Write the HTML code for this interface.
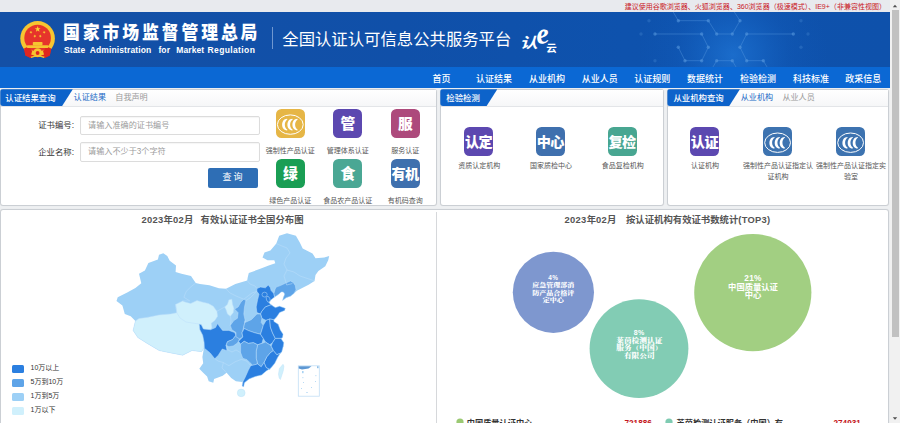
<!DOCTYPE html>
<html lang="zh-CN">
<head>
<meta charset="utf-8">
<title>全国认证认可信息公共服务平台</title>
<style>
html,body{margin:0;padding:0;}
body{width:900px;height:423px;overflow:hidden;position:relative;background:#eef0f2;font-family:"Liberation Sans","Noto Sans CJK SC",sans-serif;color:#333;}
.abs{position:absolute;}
#topstrip{left:0;top:0;width:890px;height:12px;background:#e8eaee;}
#toptext{right:14px;top:1.8px;font-size:7.02px;line-height:10px;color:#c8161d;white-space:nowrap;}
#header{left:0;top:12px;width:890px;height:55.5px;background:linear-gradient(90deg,#1450a6 0%,#1050a9 45%,#0e52ad 70%,#0e51ab 100%);overflow:hidden;}
#nav{left:0;top:67.4px;width:890px;height:20.6px;background:#0b68d4;}
.navi{position:absolute;top:1.7px;height:21px;line-height:21px;font-size:9px;font-weight:500;color:#fff;white-space:nowrap;transform:translateX(-50%);}
#title1{left:63.4px;top:21.4px;font-size:18.3px;line-height:24px;font-weight:900;color:#fff;letter-spacing:3.17px;white-space:nowrap;transform:scaleX(0.92);transform-origin:0 0;}
#title2{left:0;top:45px;font-size:8.5px;line-height:10px;font-weight:700;color:#fff;white-space:nowrap;letter-spacing:0.12px;}
#title2 span{position:absolute;top:0;}
#vdiv{left:272px;top:26.5px;width:1px;height:22.5px;background:#6f97d0;}
#title3{left:282.3px;top:26.6px;font-size:16.36px;line-height:24px;color:#fff;white-space:nowrap;}
#sbtrack{left:890px;top:0;width:10px;height:423px;background:#f1f1f1;}
#thumb{left:891.5px;top:10px;width:7px;height:327px;background:#c1c1c1;}
.panel{position:absolute;background:#fff;border:1px solid #cbcfd4;box-sizing:border-box;border-radius:3px;box-shadow:0 0 1px rgba(0,0,0,0.10);}
.phead{border-top-left-radius:3px;}
.tabhead{border-top-left-radius:3px;border-bottom-left-radius:3px;}
.phead{position:absolute;left:0;top:0;right:0;height:15.7px;border-bottom:1px solid #e3e5e8;background:linear-gradient(#fff,#f6f7f8);}
.tabhead{position:absolute;left:-1px;top:-1px;height:17.2px;background:#0d63ca;color:#fff;font-size:8.4px;line-height:18px;font-weight:500;white-space:nowrap;padding-left:5px;box-sizing:border-box;clip-path:polygon(0 0,100% 0,calc(100% - 11px) 100%,0 100%);}
.tab{position:absolute;top:0.2px;height:16px;line-height:16px;font-size:8.1px;white-space:nowrap;color:#999;}
.tab.on{color:#2069c6;}
.lbl{position:absolute;font-size:8.4px;line-height:12px;color:#333;white-space:nowrap;text-align:right;}
.inp{position:absolute;box-sizing:border-box;border:1px solid #dcdcdc;border-radius:2px;background:#fff;font-size:8.15px;color:#9c9c9c;line-height:17px;padding-left:7px;white-space:nowrap;box-shadow:inset 0 1px 1px rgba(0,0,0,0.04);}
.ico{position:absolute;width:28.9px;height:28.9px;border-radius:5.5px;color:#fff;font-weight:900;text-align:center;line-height:31.4px;font-size:14.7px;white-space:nowrap;}
.ico.s{width:28.8px;height:28.8px;line-height:31.4px;}
.icl{position:absolute;font-size:7px;line-height:9.8px;color:#555;text-align:center;transform:translateX(-50%);white-space:nowrap;}
.ctitle{position:absolute;font-size:9.37px;line-height:12px;color:#555;font-weight:700;white-space:pre;}
.dg{letter-spacing:0.3px;}
.leg{position:absolute;left:12px;width:11.7px;height:7.5px;border-radius:1.5px;}
.legt{position:absolute;left:30.5px;font-size:7px;line-height:10px;color:#333;white-space:nowrap;}
.pct{font-family:'Liberation Sans',sans-serif;letter-spacing:0.4px;}
.btxt{position:absolute;color:#fff;font-weight:700;text-align:center;white-space:nowrap;transform:translateX(-50%);}
</style>
</head>
<body>
<div id="topstrip" class="abs"></div>
<div id="toptext" class="abs">建议使用谷歌浏览器、火狐浏览器、360浏览器（极速模式）、IE9+（非兼容性视图）</div>
<div id="header" class="abs">
<svg class="abs" style="left:0;top:0" width="890" height="55" viewBox="0 12 890 55">
<defs><radialGradient id="glow" cx="733" cy="55" r="95" gradientUnits="userSpaceOnUse"><stop offset="0" stop-color="#2480e2" stop-opacity="0.58"/><stop offset="0.3" stop-color="#1e78dc" stop-opacity="0.36"/><stop offset="0.6" stop-color="#186dd2" stop-opacity="0.14"/><stop offset="1" stop-color="#1265c8" stop-opacity="0"/></radialGradient></defs>
<rect x="620" y="12" width="240" height="56" fill="url(#glow)"/>
<g fill="none" stroke="#5a9be0" stroke-opacity="0.5" stroke-width="0.8">
<polyline points="678.3,20.7 708.3,20.7 716.7,34 732.3,34 740,20.7"/>
<polyline points="655,34 701.7,34 708.3,47.3 701.7,60.7 685,60.7 678.3,47.3"/>
<polyline points="746.7,34 793.3,34"/>
<polyline points="746.7,34 740,47.3 746.7,60.7 763.3,60.7"/>
<polyline points="716.7,60.7 732.3,60.7"/>
<polyline points="716.7,60.7 710,72"/>
<polyline points="732.3,60.7 739,72"/>
<polyline points="763.3,60.7 770,72"/>
<polyline points="740,20.7 733,10"/>
<polyline points="678.3,20.7 672,10"/>
</g><g fill="#5a9be0" fill-opacity="0.55">
<circle cx="678.3" cy="20.7" r="1.7"/>
<circle cx="708.3" cy="20.7" r="1.7"/>
<circle cx="740" cy="20.7" r="1.7"/>
<circle cx="655" cy="34" r="1.7"/>
<circle cx="701.7" cy="34" r="1.7"/>
<circle cx="716.7" cy="34" r="1.7"/>
<circle cx="732.3" cy="34" r="1.7"/>
<circle cx="746.7" cy="34" r="1.7"/>
<circle cx="793.3" cy="34" r="1.7"/>
<circle cx="678.3" cy="47.3" r="1.7"/>
<circle cx="708.3" cy="47.3" r="1.7"/>
<circle cx="740" cy="47.3" r="1.7"/>
<circle cx="685" cy="60.7" r="1.7"/>
<circle cx="701.7" cy="60.7" r="1.7"/>
<circle cx="716.7" cy="60.7" r="1.7"/>
<circle cx="732.3" cy="60.7" r="1.7"/>
<circle cx="746.7" cy="60.7" r="1.7"/>
<circle cx="763.3" cy="60.7" r="1.7"/>
<circle cx="649" cy="20.7" r="1.7" fill-opacity="0.25"/>
<circle cx="641" cy="34" r="1.7" fill-opacity="0.25"/>
<circle cx="655" cy="60.7" r="1.7" fill-opacity="0.25"/>
<circle cx="801" cy="20.7" r="1.7" fill-opacity="0.25"/>
<circle cx="808" cy="34" r="1.7" fill-opacity="0.25"/>
<circle cx="801" cy="47.3" r="1.7" fill-opacity="0.25"/>
</g>
<g>
<path d="M24 48.4 L29.5 46.8 L33.5 50 L41.7 50 L45.7 46.8 L51.2 48.4 L49.8 55.6 L44.6 58 L40.6 55.4 L37.6 57.8 L34.6 55.4 L30.6 58 L25.4 55.6Z" fill="#df261e"/>
<circle cx="37.6" cy="38.4" r="17.3" fill="#f6c530"/>
<circle cx="37.6" cy="38" r="13.3" fill="#e6342b"/>
<path d="M24 48.6 L28.6 46.6 L32.2 51 L30.2 57.8 L25.4 55.6Z" fill="#df261e"/>
<path d="M51.2 48.6 L46.6 46.6 L43 51 L45 57.8 L49.8 55.6Z" fill="#df261e"/>
<rect x="32.8" y="41.9" width="9.7" height="3.5" rx="0.8" fill="#f6c530"/>
<rect x="27" y="45.2" width="21.2" height="2.7" rx="0.6" fill="#f6c530"/>
<circle cx="37.6" cy="52.7" r="4.4" fill="#f6c530"/>
<circle cx="37.6" cy="53" r="1.9" fill="#df261e"/>
<path d="M30.5 56.8 Q37.6 53.5 44.7 56.8 L43.8 58.1 Q37.6 55.6 31.4 58.1Z" fill="#f6c530"/>
<g fill="#f9d632">
<polygon points="37.70,26.10 38.43,28.20 40.65,28.24 38.88,29.58 39.52,31.71 37.70,30.44 35.88,31.71 36.52,29.58 34.75,28.24 36.97,28.20"/>
<polygon points="31.70,30.91 31.48,32.04 32.47,32.63 31.33,32.78 31.07,33.89 30.58,32.85 29.44,32.95 30.27,32.17 29.83,31.11 30.83,31.66"/>
<polygon points="34.52,34.62 35.08,35.62 36.21,35.45 35.43,36.29 35.95,37.31 34.91,36.83 34.10,37.64 34.23,36.50 33.22,35.98 34.34,35.76"/>
<polygon points="40.58,34.62 40.76,35.76 41.88,35.98 40.87,36.50 41.00,37.64 40.19,36.83 39.15,37.31 39.67,36.29 38.89,35.45 40.02,35.62"/>
<polygon points="43.40,30.91 44.27,31.66 45.27,31.11 44.83,32.17 45.66,32.95 44.52,32.85 44.03,33.89 43.77,32.78 42.63,32.63 43.62,32.04"/>
</g></g>
<g fill="#fff" font-family="'Liberation Sans','Noto Sans CJK SC',sans-serif">
<text x="0" y="0" font-size="14.5" font-weight="700" transform="translate(519.8 48.2) skewX(-16) scale(1.25 1)">认</text>
<text x="0" y="0" font-size="29" font-style="italic" font-weight="700" font-family="'Liberation Serif',serif" transform="translate(537.2 44.2) rotate(-8)">e</text>
<text x="546.2" y="51.7" font-size="10.5" font-weight="700">云</text>
</g>
</svg>
</div>
<div id="title1" class="abs">国家市场监督管理总局</div>
<div id="title2" class="abs"><span style="left:63.9px">State</span> <span style="left:89.7px">Administration</span> <span style="left:158.4px">for</span> <span style="left:176.2px">Market</span> <span style="left:207.5px;letter-spacing:0.38px">Regulation</span></div>
<div id="vdiv" class="abs"></div>
<div id="title3" class="abs">全国认证认可信息公共服务平台</div>
<div id="nav" class="abs">
<span class="navi" style="left:441.5px">首页</span>
<span class="navi" style="left:494px">认证结果</span>
<span class="navi" style="left:547px">从业机构</span>
<span class="navi" style="left:599.7px">从业人员</span>
<span class="navi" style="left:652.3px">认证规则</span>
<span class="navi" style="left:705px">数据统计</span>
<span class="navi" style="left:758px">检验检测</span>
<span class="navi" style="left:811px">科技标准</span>
<span class="navi" style="left:863.3px">政采信息</span>
</div>

<!-- panel 1 -->
<div class="panel" style="left:0.3px;top:89.3px;width:436.6px;height:117.2px;">
<div class="phead"></div>
<div class="tabhead" style="width:72.5px;">认证结果查询</div>
<div class="tab on" style="left:72.3px;">认证结果</div>
<div class="tab" style="left:114px;">自我声明</div>
</div>
<div class="lbl" style="left:20px;width:54px;top:119px;">证书编号:</div>
<div class="inp" style="left:80px;top:115.5px;width:179.5px;height:19.5px;">请输入准确的证书编号</div>
<div class="lbl" style="left:20px;width:54px;top:145.5px;">企业名称:</div>
<div class="inp" style="left:80px;top:142px;width:179.5px;height:19.5px;">请输入不少于3个字符</div>
<div class="abs" style="left:207.5px;top:168.3px;width:50px;height:19.5px;background:#2e6eb5;border-radius:2px;color:#fff;font-size:9px;line-height:19.5px;text-align:center;letter-spacing:2px;text-indent:2px;">查询</div>

<div class="ico" style="left:275.9px;top:109.4px;background:#e6b646;"></div>
<div class="ico" style="left:333.4px;top:109.4px;background:#5c48b0;">管</div>
<div class="ico" style="left:390.9px;top:109.4px;background:#ad4a7c;">服</div>
<div class="ico" style="left:275.9px;top:159.4px;background:#1a9e54;">绿</div>
<div class="ico" style="left:333.4px;top:159.4px;background:#4aa794;">食</div>
<div class="ico" style="left:390.9px;top:159.4px;background:#3f70ae;font-size:14.2px;letter-spacing:-0.6px;text-indent:-0.6px;">有机</div>
<div class="icl" style="left:290.2px;top:145.8px;">强制性产品认证</div>
<div class="icl" style="left:347.8px;top:145.8px;">管理体系认证</div>
<div class="icl" style="left:405.2px;top:145.8px;">服务认证</div>
<div class="icl" style="left:290.2px;top:195.9px;">绿色产品认证</div>
<div class="icl" style="left:347.8px;top:195.9px;">食品农产品认证</div>
<div class="icl" style="left:405.2px;top:195.9px;">有机码查询</div>

<!-- panel 2 -->
<div class="panel" style="left:440.3px;top:89.3px;width:223.8px;height:117.2px;">
<div class="phead"></div>
<div class="tabhead" style="width:57px;padding-left:6px;">检验检测</div>
</div>
<div class="ico s" style="left:464.4px;top:127.1px;background:#5c48b0;font-size:14.2px;letter-spacing:-0.6px;text-indent:-0.6px;">认定</div>
<div class="ico s" style="left:536.2px;top:127.1px;background:#3f70ae;font-size:14.2px;letter-spacing:-0.6px;text-indent:-0.6px;">中心</div>
<div class="ico s" style="left:608px;top:127.1px;background:#48a691;font-size:14.2px;letter-spacing:-0.6px;text-indent:-0.6px;">复检</div>
<div class="icl" style="left:479.2px;top:161.1px;">资质认定机构</div>
<div class="icl" style="left:551px;top:161.1px;">国家质检中心</div>
<div class="icl" style="left:622.8px;top:161.1px;">食品复检机构</div>

<!-- panel 3 -->
<div class="panel" style="left:667.4px;top:89.3px;width:221.3px;height:117.2px;">
<div class="phead"></div>
<div class="tabhead" style="width:72.5px;padding-left:6px;">从业机构查询</div>
<div class="tab on" style="left:72.3px;">从业机构</div>
<div class="tab" style="left:114px;">从业人员</div>
</div>
<div class="ico s" style="left:690.3px;top:127.1px;background:#5c48b0;font-size:14.2px;letter-spacing:-0.6px;text-indent:-0.6px;">认证</div>
<div class="ico s" style="left:763.3px;top:127.1px;background:#3d73b0;"></div>
<div class="ico s" style="left:836.3px;top:127.1px;background:#3d73b0;"></div>
<div class="icl" style="left:705px;top:161.1px;">认证机构</div>
<div class="icl" style="left:778px;top:161.1px;">强制性产品认证指定认</div><div class="icl" style="left:778px;top:171.8px;">证机构</div>
<div class="icl" style="left:851px;top:161.1px;">强制性产品认证指定实</div><div class="icl" style="left:851px;top:171.8px;">验室</div>

<!-- lower panels -->
<div class="panel" style="left:0.3px;top:208.6px;width:888.4px;height:225px;"></div>
<div class="abs" style="left:435.6px;top:212px;width:1px;height:215px;background:#d6d8db;"></div>
<div class="ctitle" style="left:141.5px;top:213.5px;"><span class="dg">2023</span>年<span class="dg">02</span>月</div><div class="ctitle" style="left:200.6px;top:213.5px;">有效认证证书全国分布图</div>
<div class="ctitle" style="left:564.6px;top:213.5px;"><span class="dg">2023</span>年<span class="dg">02</span>月</div><div class="ctitle" style="left:626px;top:213.5px;">按认证机构有效证书数统计<span style="letter-spacing:0.25px">(TOP3)</span></div>

<div class="leg" style="top:365px;background:#2b7fe0;"></div><div class="legt" style="top:363.2px;">10万以上</div>
<div class="leg" style="top:379px;background:#5ea4e8;"></div><div class="legt" style="top:377.2px;">5万到10万</div>
<div class="leg" style="top:393.2px;background:#9dd0f6;"></div><div class="legt" style="top:391.3px;">1万到5万</div>
<div class="leg" style="top:407.3px;background:#d0f0fc;"></div><div class="legt" style="top:405.4px;">1万以下</div>

<svg class="abs" style="left:0;top:0;pointer-events:none" width="900" height="423" viewBox="0 0 900 423">
<defs>
<radialGradient id="g2" cx="0.5" cy="0.5" r="0.6"><stop offset="0" stop-color="#86cdb6"/><stop offset="1" stop-color="#7bcab0"/></radialGradient>
</defs>
<g stroke="#bcdffa" stroke-width="0.5" stroke-linejoin="round">
<polygon fill="#9dd0f6" stroke="none" points="163.3,253.2 167.3,256.0 169.7,260.7 176.0,265.4 175.6,272.0 181.5,273.7 191.0,276.0 195.7,283.0 200.0,284.1 209.4,285.2 218.9,288.3 226.0,288.8 235.4,284.1 247.2,280.5 247.8,277.0 248.8,273.0 259.6,269.1 269.4,265.2 275.3,263.2 274.3,260.3 267.5,260.3 262.5,257.4 264.5,252.5 270.4,250.5 276.3,243.6 279.2,235.8 287.0,233.2 295.9,235.8 299.8,242.6 302.7,248.5 312.5,253.4 315.5,258.3 324.3,257.4 329.2,256.0 328.2,260.3 325.3,266.2 318.4,271.1 315.5,275.0 314.5,280.9 308.6,284.8 302.7,287.7 296.9,290.7 293.9,293.4 290.4,296.3 286.1,297.7 282.6,300.5 283.3,297.7 284.7,294.1 283.3,292.0 281.1,292.0 279.0,294.1 276.9,295.6 274.6,297.0 271.1,299.8 269.0,302.7 271.1,304.8 275.3,307.6 279.6,306.2 285.3,308.3 284.6,310.5 279.6,312.6 276.8,316.8 273.9,319.7 273.9,321.4 278.2,324.3 280.3,329.9 283.1,334.2 282.5,337.5 281.0,338.4 283.8,342.7 283.3,346.2 281.8,351.7 277.9,357.1 274.8,363.3 270.9,368.0 266.2,371.1 261.6,375.0 255.3,376.6 249.1,378.9 244.4,382.8 243.7,386.7 242.1,385.9 243.0,381.6 242.1,382.0 235.9,381.2 231.2,378.1 226.6,372.7 222.7,375.8 218.8,377.3 214.1,378.9 213.3,382.8 208.7,381.2 207.1,376.6 203.2,372.7 199.3,368.8 203.2,363.3 202.4,357.1 203.9,348.2 201.6,351.7 192.1,350.5 182.7,355.2 170.9,352.9 159.1,350.5 147.2,343.4 137.8,337.5 133.1,330.4 135.4,321.0 130.7,316.2 124.8,313.9 122.4,305.6 116.5,300.9 117.7,297.3 127.2,292.6 135.4,287.9 141.3,283.2 139.0,273.7 144.9,270.6 148.4,263.1 157.9,259.5 159.0,254.8"/>
<polygon fill="#d0f0fc" points="135.4,321.0 139.0,318.6 147.2,317.4 159.0,315.0 170.9,313.9 176.8,312.7 175.6,304.4 182.7,300.9 185.0,302.0 190.7,303.5 197.0,300.6 202.0,302.0 208.4,303.5 213.3,306.3 216.9,311.3 217.6,316.2 214.8,320.5 211.2,323.3 211.9,327.6 210.5,329.7 203.4,329.0 201.3,324.7 199.2,324.0 199.9,329.7 202.7,335.3 204.1,342.4 203.9,348.2 201.6,351.7 192.1,350.5 182.7,355.2 170.9,352.9 159.1,350.5 147.2,343.4 137.8,337.5 133.1,330.4"/>
<polygon fill="#d0f0fc" points="228.9,299.9 231.8,299.2 232.5,304.2 233.9,308.4 233.2,312.7 230.3,316.2 227.5,314.1 226.1,309.8 224.7,307.0 227.5,304.2"/>
<polygon fill="#2b7fe0" points="199.2,324.0 201.3,324.7 203.4,329.0 210.5,329.7 215.5,327.6 217.5,323.6 219.7,326.8 222.6,330.4 228.9,330.4 234.6,332.5 236.0,335.3 232.5,339.6 227.5,341.7 226.1,345.3 227.0,350.7 222.3,349.0 218.3,355.2 214.8,358.8 210.1,352.9 204.4,348.2 204.1,342.4 202.7,335.3 199.9,329.7"/>
<polygon fill="#5ea4e8" points="227.5,341.7 232.5,339.6 236.0,335.3 239.6,338.9 238.5,341.3 237.4,343.1 233.2,346.0 228.9,346.7 226.1,345.3"/>
<polygon fill="#5ea4e8" points="243.8,299.2 245.9,300.6 244.5,307.0 243.8,314.1 245.2,320.5 243.5,328.2 242.0,332.8 242.8,337.0 239.6,338.9 236.0,336.8 236.0,332.5 231.8,329.7 230.3,325.4 233.9,320.5 237.4,318.3 238.1,312.7 234.6,309.1 238.1,307.0 241.0,302.0"/>
<polygon fill="#2b7fe0" points="256.9,288.5 260.5,287.1 265.4,287.8 268.3,285.0 270.4,287.8 271.1,290.6 273.9,293.5 274.6,297.0 271.1,299.8 269.0,302.7 271.1,304.8 265.4,306.9 261.9,311.2 260.5,314.0 256.9,312.6 256.2,306.9 257.6,299.8 259.0,294.2 256.9,291.3"/>
<polygon fill="#2b7fe0" points="271.1,304.8 275.3,307.6 279.6,306.2 285.3,308.3 284.6,310.5 279.6,312.6 276.8,316.8 273.9,319.7 269.7,319.0 266.1,320.4 261.9,318.3 260.5,314.0 261.9,311.2 265.4,306.9"/>
<polygon fill="#5ea4e8" points="275.1,289.2 276.2,287.1 280.4,285.6 285.4,283.2 290.4,281.0 293.2,282.4 295.3,285.6 296.0,289.9 293.9,293.4 290.4,296.3 286.1,297.7 282.6,300.5 283.3,297.7 284.7,294.1 283.3,292.0 281.1,292.0 279.0,294.1 276.9,295.6 274.6,297.0 273.9,293.5"/>
<polygon fill="#5ea4e8" points="244.9,322.5 251.3,319.7 256.9,314.0 260.5,314.0 261.9,318.3 261.2,322.5 263.3,325.3 261.9,329.9 260.5,334.2 254.8,332.8 248.4,330.6 244.2,328.5 243.5,328.2 245.2,320.5"/>
<polygon fill="#2b7fe0" points="238.5,341.3 242.8,337.0 242.0,332.8 244.2,328.5 248.4,330.6 254.8,332.8 260.5,334.2 263.3,338.4 261.9,343.4 257.6,344.8 253.4,342.7 248.4,343.4 244.2,341.3 240.6,344.1"/>
<polygon fill="#2b7fe0" points="263.3,325.3 266.1,320.4 269.7,319.0 270.4,327.1 272.5,332.8 275.3,338.4 272.5,342.7 269.7,344.8 265.4,342.0 263.3,338.4 260.5,334.2 261.9,329.9"/>
<polygon fill="#2b7fe0" points="269.7,319.0 273.9,319.7 273.9,321.4 278.2,324.3 280.3,329.9 283.1,334.2 282.5,337.5 281.0,338.4 275.3,338.4 272.5,332.8 270.4,327.1"/>
<polygon fill="#2b7fe0" points="275.3,338.4 281.0,338.4 283.8,342.7 283.3,346.2 281.8,351.7 280.3,353.3 276.8,354.7 273.2,350.5 271.1,346.2 272.5,342.7"/>
<polygon fill="#2b7fe0" points="273.2,350.5 276.8,354.7 280.3,353.3 277.9,357.1 274.8,363.3 270.9,368.0 269.7,369.6 266.1,367.5 264.0,362.5 266.8,356.8 270.4,352.6"/>
<polygon fill="#5ea4e8" points="257.6,344.8 261.9,343.4 265.4,342.0 269.7,344.8 271.1,346.2 273.2,350.5 270.4,352.6 266.8,356.8 264.0,362.5 261.2,366.8 257.6,363.9 256.2,358.3 256.2,351.2"/>
<polygon fill="#5ea4e8" points="240.6,344.1 244.2,341.3 248.4,343.4 253.4,342.7 257.6,344.8 256.2,351.2 256.2,358.3 257.6,363.9 252.7,365.3 249.8,362.5 247.0,359.7 242.8,358.3 240.6,352.6"/>
<polygon fill="#2b7fe0" points="248.3,370.3 250.7,365.7 252.7,365.3 257.6,363.9 261.2,366.8 264.0,362.5 266.1,367.5 269.7,369.6 270.9,368.0 266.2,371.1 261.6,375.0 255.3,376.6 249.1,378.9 244.4,382.8 243.7,386.7 242.1,385.9 243.0,381.6 245.2,377.3"/>
<polygon fill="#d0f0fc" stroke="#bfe3f8" points="283.0,364.3 283.9,366.0 283.2,371.1 280.4,379.5 279.2,378.0 278.5,374.2 279.4,368.5"/>
<ellipse cx="241.2" cy="392.9" rx="3.9" ry="3.8" fill="#d0f0fc" stroke="#bfe3f8"/>
<polyline fill="none" points="195.7,283.0 191.0,286.7 186.2,291.4 183.9,297.3 189.8,300.9 182.7,300.9"/>
<polyline fill="none" points="175.6,304.4 176.8,312.7"/>
<polyline fill="none" points="176.8,312.7 180.0,318.0 186.0,322.0 192.0,323.0 199.2,324.0"/>
<polyline fill="none" points="247.2,280.5 250.0,284.0 255.0,286.0 256.9,288.5"/>
<polyline fill="none" points="226.0,288.8 230.0,293.0 236.0,296.0 243.8,299.2 248.0,296.0 252.0,293.0 256.9,291.3"/>
<polyline fill="none" points="276.3,243.6 282.0,246.0 287.0,248.0 290.0,253.0 286.0,258.0 284.0,264.0 287.0,270.0 284.0,276.0 286.7,285.0"/>
<polyline fill="none" points="287.0,270.0 294.0,272.0 300.0,276.0 306.0,278.0 314.5,280.9"/>
<polyline fill="none" points="286.7,285.0 292.4,283.5"/>
<polyline fill="none" points="245.9,300.6 250.0,298.0 256.9,291.3"/>
<polyline fill="none" points="216.9,311.3 221.0,309.0 224.7,307.0"/>
<polyline fill="none" points="230.3,316.2 231.0,320.0 230.3,325.4"/>
<polyline fill="none" points="214.9,358.7 218.0,361.0 223.4,362.6 228.9,365.7 235.1,361.8 241.3,359.4 246.8,361.0 250.7,365.7"/>
<polyline fill="none" points="223.4,362.6 222.0,368.0 226.6,372.7"/>
<polyline fill="none" points="226.1,345.3 228.0,350.0 232.0,352.0 236.0,350.0 240.6,352.6"/>
<ellipse cx="264.6" cy="294.6" rx="2.6" ry="2.4" fill="none"/>
<ellipse cx="268.2" cy="299.3" rx="1.8" ry="3" fill="none" transform="rotate(-20 268.2 299.3)"/>
</g>
<rect x="298.3" y="365.8" width="21" height="30.4" fill="#fff" stroke="#c2def6" stroke-width="0.8"/>
<path d="M298.7 366.2 L311.5 366.2 L308.5 368.6 L302 369.6 L298.7 368.4Z" fill="#5c97d3"/>
<rect x="317" y="366.2" width="1.6" height="2" fill="#8fc0ea"/>
<g fill="#a9d3f3"><rect x="302" y="371" width="1.6" height="2.2"/><rect x="302.5" y="377" width="0.8" height="1.2"/><rect x="315.5" y="375" width="0.8" height="1.2"/><rect x="303" y="382" width="0.8" height="1"/><rect x="315" y="381" width="0.8" height="1"/><rect x="311" y="387" width="0.8" height="1"/><rect x="301" y="388" width="0.8" height="1"/><rect x="306" y="392" width="2" height="0.6"/></g>
<g transform="translate(290.3,124.6)"><ellipse cx="0" cy="0" rx="12.9" ry="9.7" fill="none" stroke="#fff" stroke-width="1"/><g fill="#fff"><path d="M-3.2 -5.8 C-9.80 -5.8 -9.80 5.8 -3.2 5.8 L-2.90 5.1 C-6.30 3.2 -6.30 -3.2 -2.90 -5.1Z"/><path d="M2.1 -5.8 C-4.50 -5.8 -4.50 5.8 2.1 5.8 L2.40 5.1 C-1.00 3.2 -1.00 -3.2 2.40 -5.1Z"/><path d="M7.1 -5.8 C0.50 -5.8 0.50 5.8 7.1 5.8 L7.40 5.1 C4.00 3.2 4.00 -3.2 7.40 -5.1Z"/></g></g>
<g transform="translate(777.6,142.7)"><ellipse cx="0" cy="0" rx="12.9" ry="9.7" fill="none" stroke="#fff" stroke-width="1"/><g fill="#fff"><path d="M-3.2 -5.8 C-9.80 -5.8 -9.80 5.8 -3.2 5.8 L-2.90 5.1 C-6.30 3.2 -6.30 -3.2 -2.90 -5.1Z"/><path d="M2.1 -5.8 C-4.50 -5.8 -4.50 5.8 2.1 5.8 L2.40 5.1 C-1.00 3.2 -1.00 -3.2 2.40 -5.1Z"/><path d="M7.1 -5.8 C0.50 -5.8 0.50 5.8 7.1 5.8 L7.40 5.1 C4.00 3.2 4.00 -3.2 7.40 -5.1Z"/></g></g>
<g transform="translate(850.6,142.7)"><ellipse cx="0" cy="0" rx="12.9" ry="9.7" fill="none" stroke="#fff" stroke-width="1"/><g fill="#fff"><path d="M-3.2 -5.8 C-9.80 -5.8 -9.80 5.8 -3.2 5.8 L-2.90 5.1 C-6.30 3.2 -6.30 -3.2 -2.90 -5.1Z"/><path d="M2.1 -5.8 C-4.50 -5.8 -4.50 5.8 2.1 5.8 L2.40 5.1 C-1.00 3.2 -1.00 -3.2 2.40 -5.1Z"/><path d="M7.1 -5.8 C0.50 -5.8 0.50 5.8 7.1 5.8 L7.40 5.1 C4.00 3.2 4.00 -3.2 7.40 -5.1Z"/></g></g>
<circle cx="553.4" cy="292.3" r="40.6" fill="#7e97cf"/>
<circle cx="639" cy="348.6" r="49.4" fill="#82ccb4"/>
<circle cx="752.8" cy="292.6" r="58.6" fill="#a2cf82"/>
<g fill="#fff" text-anchor="middle" font-weight="700">
<g font-family="'Liberation Sans',sans-serif">
<text x="553.3" y="280.3" font-size="6.4" letter-spacing="0.4">4%</text>
<text x="639.3" y="335.4" font-size="7" letter-spacing="0.4">8%</text>
</g>
<g font-family="'Liberation Serif','Noto Serif CJK SC',serif" font-weight="900">
<text transform="translate(553.3 287.4) scale(1 0.89)" font-size="7">应急管理部消</text>
<text transform="translate(553.3 294.6) scale(1 0.89)" font-size="7">防产品合格评</text>
<text transform="translate(553.3 302.3) scale(1 0.89)" font-size="7">定中心</text>
<text transform="translate(639.3 343) scale(1 0.83)" font-size="7.7">莱茵检测认证</text>
<text transform="translate(639.3 350.2) scale(1 0.83)" font-size="7.7">服务（中国）</text>
<text transform="translate(639.3 357.8) scale(1 0.83)" font-size="7.7">有限公司</text>
</g>
<g font-family="'Liberation Sans','Noto Sans CJK SC',sans-serif" font-size="8.3">
<text x="753" y="280.6" letter-spacing="0.3">21%</text>
<text x="753" y="289.8">中国质量认证</text>
<text x="753" y="298.4">中心</text>
</g>
</g>
<circle cx="460" cy="422" r="3.6" fill="#9bc973"/>
<circle cx="669" cy="422" r="3.6" fill="#7fcbb2"/>
</svg>
<!--BUBTXT-->
<div class="abs" style="left:466.8px;top:418.3px;font-size:8.2px;line-height:11px;font-weight:700;color:#333;white-space:nowrap;">中国质量认证中心</div>
<div class="abs" style="left:624.5px;top:418.3px;font-size:8.2px;line-height:11px;font-weight:700;color:#c4161c;white-space:nowrap;">721886</div>
<div class="abs" style="left:676.6px;top:418.3px;font-size:8.2px;line-height:11px;font-weight:700;color:#333;white-space:nowrap;">莱茵检测认证服务（中国）有</div>
<div class="abs" style="left:833.5px;top:418.3px;font-size:8.2px;line-height:11px;font-weight:700;color:#c4161c;white-space:nowrap;">274931</div>

<div id="sbtrack" class="abs"></div>
<div id="thumb" class="abs"></div>
<svg class="abs" style="left:890px;top:0" width="10" height="423" viewBox="0 0 10 423"><path d="M2.8 7.2 L5 4.8 L7.2 7.2Z" fill="#505050"/><path d="M2.8 417.3 L5 419.7 L7.2 417.3Z" fill="#505050"/></svg>
</body>
</html>
